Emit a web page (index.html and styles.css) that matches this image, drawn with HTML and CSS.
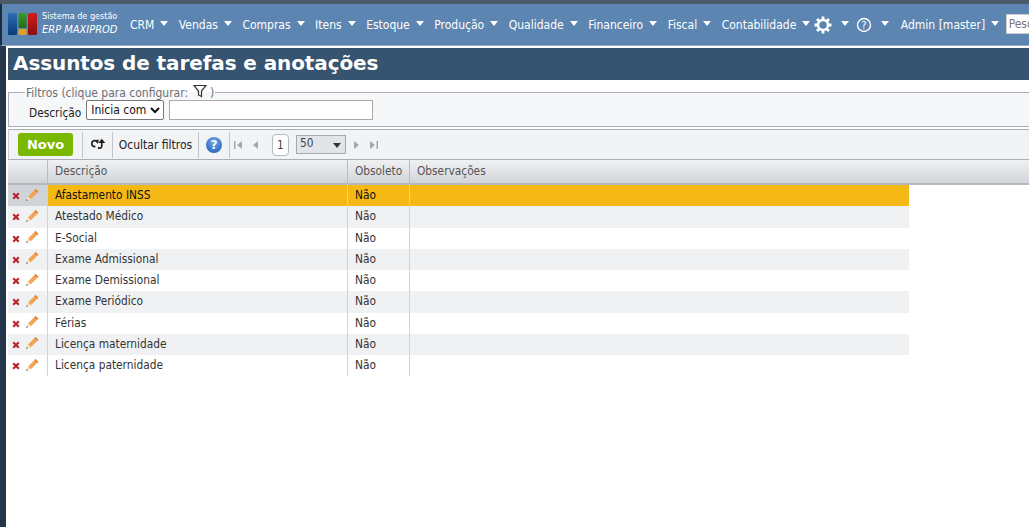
FILE: index.html
```html
<!DOCTYPE html>
<html lang="pt-BR">
<head>
<meta charset="utf-8">
<title>Assuntos de tarefas e anotações</title>
<link rel="stylesheet" href="styles.css">
</head>
<body>
<div class="shell">
  <header class="topbar">
    <div class="brand">
      <svg class="logo" width="30" height="36" viewBox="0 0 30 36">
        <defs>
          <linearGradient id="b" x1="0" y1="0" x2="0" y2="1"><stop offset="0" stop-color="#2a6fb5"/><stop offset="1" stop-color="#0b3a78"/></linearGradient>
          <linearGradient id="g" x1="0" y1="0" x2="0" y2="1"><stop offset="0" stop-color="#3c9a2a"/><stop offset="1" stop-color="#1e6d18"/></linearGradient>
          <linearGradient id="r" x1="0" y1="0" x2="0" y2="1"><stop offset="0" stop-color="#d01c1c"/><stop offset="1" stop-color="#8e0d12"/></linearGradient>
        </defs>
        <rect x="0" y="6" width="9" height="22" rx="1.5" fill="url(#b)"/>
        <rect x="10.500" y="6" width="8" height="15" rx="1" fill="url(#g)"/>
        <rect x="10.500" y="22" width="8" height="6" rx="1" fill="#e2a21c"/>
        <rect x="20" y="6" width="9" height="22" rx="1.500" fill="url(#r)"/>
      </svg>
      <div class="brand-text">
        <span class="brand-top">Sistema de gestão</span>
        <span class="brand-name">ERP MAXIPROD</span>
      </div>
    </div>
    <nav class="menu">
      <a class="item">CRM<i class="caret"></i></a>
      <a class="item">Vendas<i class="caret"></i></a>
      <a class="item">Compras<i class="caret"></i></a>
      <a class="item">Itens<i class="caret"></i></a>
      <a class="item">Estoque<i class="caret"></i></a>
      <a class="item">Produção<i class="caret"></i></a>
      <a class="item">Qualidade<i class="caret"></i></a>
      <a class="item">Financeiro<i class="caret"></i></a>
      <a class="item">Fiscal<i class="caret"></i></a>
      <a class="item item-last">Contabilidade<i class="caret"></i></a>
      <a class="item icon-item">
        <svg width="18" height="18" viewBox="0 0 18 18"><g fill="none" stroke="#fff"><circle cx="9" cy="9" r="5" stroke-width="2.400"/><path stroke-width="2.800" d="M9 0.500v3M9 14.500v3M0.500 9h3M14.500 9h3M3 3l2.100 2.100M12.900 12.900L15 15M15 3l-2.100 2.100M5.100 12.900L3 15"/></g></svg>
        <i class="caret"></i>
      </a>
      <a class="item icon-item">
        <svg width="16" height="16" viewBox="0 0 16 16"><circle cx="8" cy="8" r="6.500" fill="none" stroke="#fff" stroke-width="1.400"/><text x="8" y="11.500" class="q">?</text></svg>
        <i class="caret"></i>
      </a>
      <a class="item user">Admin [master]<i class="caret"></i></a>
    </nav>
    <input class="search" type="text" placeholder="Pesquisar">
  </header>

  <main class="page">
    <h1 class="title">Assuntos de tarefas e anotações</h1>

    <fieldset class="filters">
      <legend>Filtros (clique para configurar: <svg class="funnel" width="14" height="14" viewBox="0 0 14 14"><path d="M1 1.500h12L8.500 7v5.500l-3-1.500V7z" fill="none" stroke="#333" stroke-width="1.200"/></svg> )</legend>
      <div class="filter-row">
        <label class="filter-label" for="op">Descrição</label>
        <select id="op" class="filter-select"><option>Inicia com</option></select>
        <input class="filter-input" type="text">
      </div>
    </fieldset>

    <div class="toolbar">
      <button class="btn-new" type="button">Novo</button>
      <span class="sep"></span>
      <span class="tool refresh">
        <svg width="16" height="13" viewBox="0 0 16 13"><g fill="none" stroke="#222" stroke-width="1.700"><path d="M7.500 4C6 1.800 2 2 1.800 5.500c-.1 2.300 1.800 3.500 3.700 3"/><path d="M8 9.500c1.500 1.200 3.800.8 3.800-1.800V4"/></g><path d="M4.500 2.200L8.800 1.500 8 6zM8.300 5h7L11.800 .8z" fill="#222"/></svg>
      </span>
      <span class="sep"></span>
      <span class="tool tool-text">Ocultar filtros</span>
      <span class="sep"></span>
      <span class="help">?</span>
      <span class="sep"></span>
      <span class="pager">
        <svg width="10" height="10" viewBox="0 0 10 10"><path d="M1 1h1.500v8H1zM9 1v8L4 5z" fill="#a3a8ad"/></svg>
        <svg class="pg-gap" width="10" height="10" viewBox="0 0 10 10"><path d="M8 1v8L3 5z" fill="#a3a8ad"/></svg>
        <span class="page-num">1</span>
        <span class="page-size">50<i class="size-caret"></i></span>
        <svg width="10" height="10" viewBox="0 0 10 10"><path d="M2 1v8l5-4z" fill="#a3a8ad"/></svg>
        <svg class="pg-gap" width="10" height="10" viewBox="0 0 10 10"><path d="M1 1v8l5-4zM7.500 1H9v8H7.500z" fill="#a3a8ad"/></svg>
      </span>
    </div>

    <div class="grid-head">
      <div class="hcell c-act"></div>
      <div class="hcell c-desc">Descrição</div>
      <div class="hcell c-obs">Obsoleto</div>
      <div class="hcell c-note">Observações</div>
    </div>

    <div class="rows" id="rows">
      <div class="row selected"><span class="c-act act"><svg class="x" width="8" height="8" viewBox="0 0 8 8"><use href="#cross"/></svg><svg class="pen" width="14" height="14" viewBox="0 0 14 14"><use href="#pencil"/></svg></span><span class="c-desc cell">Afastamento INSS</span><span class="c-obs cell">Não</span><span class="c-note cell"></span></div>
      <div class="row"><span class="c-act act"><svg class="x" width="8" height="8" viewBox="0 0 8 8"><use href="#cross"/></svg><svg class="pen" width="14" height="14" viewBox="0 0 14 14"><use href="#pencil"/></svg></span><span class="c-desc cell">Atestado Médico</span><span class="c-obs cell">Não</span><span class="c-note cell"></span></div>
      <div class="row"><span class="c-act act"><svg class="x" width="8" height="8" viewBox="0 0 8 8"><use href="#cross"/></svg><svg class="pen" width="14" height="14" viewBox="0 0 14 14"><use href="#pencil"/></svg></span><span class="c-desc cell">E-Social</span><span class="c-obs cell">Não</span><span class="c-note cell"></span></div>
      <div class="row"><span class="c-act act"><svg class="x" width="8" height="8" viewBox="0 0 8 8"><use href="#cross"/></svg><svg class="pen" width="14" height="14" viewBox="0 0 14 14"><use href="#pencil"/></svg></span><span class="c-desc cell">Exame Admissional</span><span class="c-obs cell">Não</span><span class="c-note cell"></span></div>
      <div class="row"><span class="c-act act"><svg class="x" width="8" height="8" viewBox="0 0 8 8"><use href="#cross"/></svg><svg class="pen" width="14" height="14" viewBox="0 0 14 14"><use href="#pencil"/></svg></span><span class="c-desc cell">Exame Demissional</span><span class="c-obs cell">Não</span><span class="c-note cell"></span></div>
      <div class="row"><span class="c-act act"><svg class="x" width="8" height="8" viewBox="0 0 8 8"><use href="#cross"/></svg><svg class="pen" width="14" height="14" viewBox="0 0 14 14"><use href="#pencil"/></svg></span><span class="c-desc cell">Exame Periódico</span><span class="c-obs cell">Não</span><span class="c-note cell"></span></div>
      <div class="row"><span class="c-act act"><svg class="x" width="8" height="8" viewBox="0 0 8 8"><use href="#cross"/></svg><svg class="pen" width="14" height="14" viewBox="0 0 14 14"><use href="#pencil"/></svg></span><span class="c-desc cell">Férias</span><span class="c-obs cell">Não</span><span class="c-note cell"></span></div>
      <div class="row"><span class="c-act act"><svg class="x" width="8" height="8" viewBox="0 0 8 8"><use href="#cross"/></svg><svg class="pen" width="14" height="14" viewBox="0 0 14 14"><use href="#pencil"/></svg></span><span class="c-desc cell">Licença maternidade</span><span class="c-obs cell">Não</span><span class="c-note cell"></span></div>
      <div class="row"><span class="c-act act"><svg class="x" width="8" height="8" viewBox="0 0 8 8"><use href="#cross"/></svg><svg class="pen" width="14" height="14" viewBox="0 0 14 14"><use href="#pencil"/></svg></span><span class="c-desc cell">Licença paternidade</span><span class="c-obs cell">Não</span><span class="c-note cell"></span></div>
    </div>
  </main>
</div>
<svg class="defs" width="0" height="0">
  <symbol id="pencil" viewBox="0 0 14 14">
    <path d="M3 8.500L10.500 1l2.800 2.800-7.500 7.500z" fill="#f2a452"/>
    <path d="M9.500 2l1-1 2.800 2.800-1 1z" fill="#e37f32"/>
    <path d="M3 8.500L1 13l4.800-1.700z" fill="#f5dfbe"/>
    <path d="M1 13l.8-1.900 1.100 1.100z" fill="#6a5a48"/>
  </symbol>
  <symbol id="cross" viewBox="0 0 8 8">
    <path d="M1.200 1.200l5.600 5.600M6.800 1.200L1.200 6.800" fill="none" stroke="#b9232c" stroke-width="2.100"/>
  </symbol>
</svg>
</body>
</html>
```
FILE: styles.css
```css
* { box-sizing: border-box; }
html, body { margin: 0; height: 100%; overflow: hidden; }
body {
  background: #4a5a66;
  font-family: "DejaVu Sans Condensed", "DejaVu Sans", sans-serif;
  font-size: 11.800px;
  color: #333;
}
.defs { position: absolute; }
.shell {
  height: 527px;
  padding-top: 4px;
  display: flex;
  flex-direction: column;
}
.topbar {
  height: 42px;
  padding-left: 8px;
  background: #5c85b1;
  border-left: 2px solid #1d2d40;
  border-bottom: 1px solid #9eabb8;
  display: flex;
  align-items: center;
  color: #fff;
  overflow: hidden;
  flex: none;
}
.brand { display: flex; align-items: center; gap: 4px; width: 122px; flex: none; margin-left: -2px; }
.logo { flex: none; }
.brand-text { display: flex; flex-direction: column; line-height: 13px; margin-top: -3px; }
.brand-top { font-size: 9px; white-space: nowrap; font-weight: 400; }
.brand-name { font-size: 11px; font-style: italic; white-space: nowrap; }
.menu { display: flex; align-items: center; flex: none; margin-top: 1px; }
.item { display: flex; align-items: center; font-size: 12px; white-space: nowrap; margin-right: 10.500px; }
.item-last { margin-right: 3.500px; }
.caret {
  display: inline-block;
  width: 0; height: 0;
  margin-left: 6px;
  margin-top: -3px;
  border-left: 4.500px solid transparent;
  border-right: 4.500px solid transparent;
  border-top: 5px solid #fff;
}
.icon-item { margin-right: 7px; }
.icon-item + .icon-item { margin-right: 12px; }
.icon-item .caret { margin-left: 9px; }
.q { font-size: 10px; fill: #fff; text-anchor: middle; font-family: "DejaVu Sans", sans-serif; }
.search {
  width: 60px;
  height: 20px;
  margin-top: -1px;
  margin-left: -4px;
  padding: 0 2px;
  border: 1px solid #ccc;
  font: 12px "DejaVu Sans Condensed", sans-serif;
  flex: none;
}
.search::placeholder { color: #777; }
.page {
  flex: 1;
  background: #fff;
  border-left: 6px solid #1d2d40;
  border-image: linear-gradient(#25364a, #25364a) 1;
  padding: 2px 0 0 2px;
  min-height: 0;
}
.title {
  margin: 0;
  height: 32px;
  padding: 0 0 0 5px;
  background: #36536f;
  color: #fff;
  font: 700 20px/31px "DejaVu Sans", sans-serif;
  letter-spacing: -.1px;
  white-space: nowrap;
}
.filters {
  margin: 4px 0 0;
  padding: 0 0 0 20px;
  height: 43px;
  background: #f6f7f9;
  border: 1px solid #a9aeb8;
  border-right: 0;
  min-inline-size: 0;
}
.filters legend {
  padding: 0 1px;
  margin-left: -4px;
  color: #6b6f75;
  font-size: 12px;
  line-height: 14px;
  white-space: nowrap;
}
.funnel { vertical-align: -1px; margin-left: 1px; }
.filter-row { display: flex; align-items: center; height: 22px; margin-top: -1px; }
.filter-label { color: #222; margin-right: 5px; margin-top: 6px; }
.filter-select {
  width: 78px; height: 20px;
  font: 12px "DejaVu Sans Condensed", sans-serif;
  color: #111; background: #fff;
  border: 1px solid #777; border-radius: 2px;
  padding: 0;
}
.filter-input {
  width: 204px; height: 20px;
  margin-left: 5px;
  border: 1px solid #aaa;
  background: #fff;
}
.toolbar {
  margin-top: 2px;
  height: 30px;
  background: #f1f3f5;
  border-top: 1px solid #a9aeb8;
  border-left: 1px solid #c8ccd2;
  display: flex;
  align-items: center;
  padding-left: 9px;
}
.btn-new {
  width: 55px; height: 23px;
  background: #7ab800;
  color: #fff;
  border: 0; border-radius: 3px;
  font: 700 13px "DejaVu Sans", sans-serif;
  padding: 0;
}
.sep { width: 1px; height: 26px; background: #c2c6cc; flex: none; }
.btn-new + .sep { margin-left: 9px; }
.tool { display: flex; align-items: center; justify-content: center; height: 26px; }
.refresh { width: 29px; }
.tool-text { width: 85px; color: #222; white-space: nowrap; font-size: 12px; }
.help {
  width: 16px; height: 16px;
  margin: 0 7px 0 7px;
  border-radius: 50%;
  background: radial-gradient(circle at 50% 30%, #6ea4e8, #1c5cb4);
  color: #fff;
  font: 700 12px/16px "DejaVu Sans", sans-serif;
  text-align: center;
}
.pager { display: flex; align-items: center; margin-left: 3px; color: #444; }
.pg-gap { margin-left: 7px; }
.page-num {
  width: 17px; height: 22px;
  margin-left: 12px;
  border: 1px solid #b5b9bf; border-radius: 4px;
  background: #fff;
  line-height: 20px;
  text-align: center;
}
.page-size {
  position: relative;
  width: 50px; height: 19px;
  margin: 0 6px 0 7px;
  padding-left: 3px;
  background: #e1e4e8;
  border: 1px solid #a5a9af;
  line-height: 15px;
}
.size-caret {
  position: absolute; right: 4px; top: 7px;
  border-left: 4.500px solid transparent;
  border-right: 4.500px solid transparent;
  border-top: 5px solid #333;
}
.grid-head {
  display: flex;
  height: 26px;
  background: linear-gradient(#f0f1f3, #d2d4d9);
  border-top: 1px solid #a9aeb8;
  border-bottom: 2px solid #b5b8be;
  color: #555;
}
.hcell { height: 100%; padding: 4px 0 0 7px; border-right: 1px solid #b8bcc2; white-space: nowrap; }
.c-act { width: 40px; flex: none; }
.c-desc { width: 300px; flex: none; }
.c-obs { width: 62px; flex: none; }
.c-note { width: 500px; flex: none; }
.hcell.c-note { border-right: 0; }
.rows { width: 901px; }
.row { display: flex; height: 21.250px; background: #fff; }
.row:nth-child(even) { background: #f0f1f3; }
.row.selected { background: #f5b915; color: #111; }
.cell { padding: 3px 0 0 7px; border-right: 1px solid #d0d4d9; line-height: 15px; white-space: nowrap; overflow: hidden; }
.c-note.cell { border-right: 0; }
.act { display: flex; align-items: center; padding-left: 4px; background: #fff; border-right: 1px solid #d0d4d9; }
.row:nth-child(even) .act { background: #f0f1f3; }
.row.selected .act { background: #d0d4d9; }
.x { margin-top: 1px; }
.pen { margin-left: 5px; margin-top: -2px; }
```
